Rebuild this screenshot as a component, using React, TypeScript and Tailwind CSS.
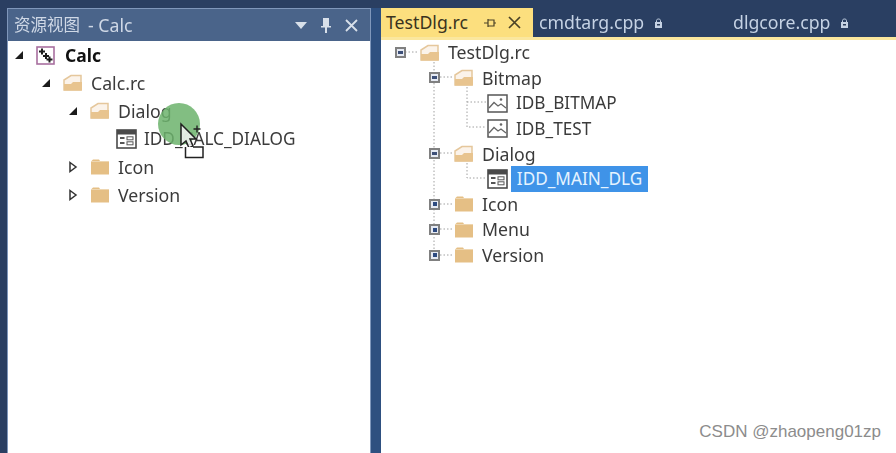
const font = { fontFamily: '"Noto Sans", "Noto Sans CJK SC", sans-serif' };

function FolderOpen() {
  return (
    <svg width="20" height="18" viewBox="0 0 20 18" className="shrink-0">
      <path d="M1 16V6L8 1.5H18V16Z" fill="#fbf3ea" stroke="#e5c79c" strokeWidth="1.5" />
      <path d="M1 10H8L10 8H19V16.5H1Z" fill="#e8c48f" />
    </svg>
  );
}
function FolderClosed() {
  return (
    <svg width="20" height="18" viewBox="0 0 20 18" className="shrink-0">
      <path d="M1 3.5L3 1.5H9L10 3H19V16.5H1Z" fill="#e5bf85" />
      <path d="M1 3.5H19" stroke="#eed6b0" strokeWidth="1" />
    </svg>
  );
}
function DialogIcon() {
  return (
    <svg width="21" height="20" viewBox="0 0 21 20" className="shrink-0">
      <rect x="1" y="1" width="19" height="18" fill="#fff" stroke="#4a4a4a" strokeWidth="1.6" />
      <rect x="1" y="1" width="19" height="4.5" fill="#4a4a4a" />
      <path d="M4 9H8.5M4 14H8.5" stroke="#555" strokeWidth="2" />
      <rect x="11" y="7.8" width="6" height="3" fill="none" stroke="#555" />
      <rect x="11" y="12.8" width="6" height="3" fill="none" stroke="#555" />
    </svg>
  );
}
function BitmapIcon() {
  return (
    <svg width="21" height="19" viewBox="0 0 21 19" className="shrink-0">
      <rect x="1" y="1" width="19" height="17" fill="#fff" stroke="#555" strokeWidth="1.5" />
      <path d="M2 14L7 8.5L11 12L14 10L19 14" fill="none" stroke="#666" strokeWidth="1.3" />
      <circle cx="14" cy="5.5" r="1.3" fill="#666" />
    </svg>
  );
}
function ProjectIcon() {
  return (
    <svg width="19" height="19" viewBox="0 0 19 19" className="shrink-0">
      <rect x="1" y="1" width="17" height="17" fill="#fff" stroke="#a86f9f" strokeWidth="1.6" />
      <path d="M6 2.5V8.5M3 5.5H9M10 7V13M7 10H13M13.5 10.5V16.5M10.5 13.5H16.5" stroke="#1c1c1c" strokeWidth="2" />
    </svg>
  );
}
function Arrow({ open }: { open: boolean }) {
  return (
    <svg width="10" height="12" viewBox="0 0 10 12" className="shrink-0">
      {open ? <path d="M1 10H9V2Z" fill="#1c1c1c" /> : <path d="M2 1.5L8 6L2 10.5Z" fill="#fff" stroke="#333" strokeWidth="1.5" />}
    </svg>
  );
}
function Expander({ open }: { open: boolean }) {
  return (
    <div className="relative z-10 flex h-[11px] w-[11px] shrink-0 items-center justify-center border-2 border-[#808080] bg-[#e6eaf3]">
      {open ? <div className="h-[3px] w-[5px] bg-[#3d4f78]" /> : <div className="h-[4px] w-[4px] bg-[#2d4a80]" />}
    </div>
  );
}

function LeftRow({ indent, open, icon, children, bold, gap, size }: { indent: string; open?: boolean; icon: React.ReactNode; children: React.ReactNode; bold?: boolean; gap: string; size: string }) {
  return (
    <div className={`flex h-[28px] items-center ${indent}`}>
      {open === undefined ? null : <div className="flex w-[22px] shrink-0 justify-start"><Arrow open={open} /></div>}
      {icon}
      <span className={`whitespace-nowrap ${gap} ${size} ${bold ? 'font-bold text-[#111]' : 'text-[#3b3b3b]'}`}>{children}</span>
    </div>
  );
}

function RightRow({ indent, open, icon, children, selected, size }: { indent: string; open?: boolean; icon: React.ReactNode; children: React.ReactNode; selected?: boolean; size: string }) {
  return (
    <div className={`flex h-[25.3px] items-center ${indent}`}>
      {open === undefined ? null : <Expander open={open} />}
      {open === undefined ? null : <div className="w-[14px]" />}
      {icon}
      {selected ? (
        <span className={`ml-[3px] flex h-[26px] w-[137px] items-center justify-center bg-[#3f93e8] whitespace-nowrap text-[#e6f3ff] ${size}`}>{children}</span>
      ) : (
        <span className={`ml-[8px] whitespace-nowrap text-[#3b3b3b] ${size}`}>{children}</span>
      )}
    </div>
  );
}

function Lock() {
  return (
    <svg width="7" height="10" viewBox="0 0 7 10" className="ml-[11px]">
      <path d="M1.5 4V2.5C1.5 0.5 5.5 0.5 5.5 2.5V4" fill="none" stroke="#c5d2e4" />
      <rect x="0" y="4" width="7" height="6" fill="#c5d2e4" />
      <rect x="2" y="6" width="3" height="1.5" fill="#2a3c59" />
    </svg>
  );
}

export default function App() {
  return (
    <div className="flex h-[453px] w-[896px] overflow-hidden bg-[#2a3f62] pt-[8px] pl-[7px]" style={font}>
      {/* Left tool window */}
      <div className="flex w-[364px] shrink-0 flex-col border border-b-0 border-[#7f97bb] bg-white">
        <div className="flex h-[32px] shrink-0 items-center justify-between bg-[#4a648a] pr-[12px] pl-[6px] blur-[0.4px]">
          <span className="flex items-center whitespace-nowrap text-[#cfd8e6]">
            <span className="text-[16.5px]">资源视图</span>
            <span className="ml-[8px] text-[17.7px]">- Calc</span>
          </span>
          <div className="flex items-center gap-[13px]">
            <svg width="12" height="7" viewBox="0 0 12 7"><path d="M0 0H12L6 7Z" fill="#d8e0ea" /></svg>
            <svg width="12" height="17" viewBox="0 0 12 17"><path d="M3 1H9V9H11V10.5H7V16H5V10.5H1V9H3Z" fill="#d8e0ea" /></svg>
            <svg width="13" height="13" viewBox="0 0 13 13"><path d="M1 1L12 12M12 1L1 12" stroke="#d8e0ea" strokeWidth="1.8" /></svg>
          </div>
        </div>
        <div className="relative flex-1 blur-[0.4px]">
          <LeftRow indent="pl-[6px]" open icon={<ProjectIcon />} bold gap="ml-[10px]" size="text-[17.5px]">Calc</LeftRow>
          <LeftRow indent="pl-[33px]" open icon={<FolderOpen />} gap="ml-[8px]" size="text-[17.7px]">Calc.rc</LeftRow>
          <LeftRow indent="pl-[60px]" open icon={<FolderOpen />} gap="ml-[8px]" size="text-[17.7px]">Dialog</LeftRow>
          <LeftRow indent="pl-[108px]" icon={<DialogIcon />} gap="ml-[7px]" size="text-[17.2px]">IDD_CALC_DIALOG</LeftRow>
          <LeftRow indent="pl-[60px]" open={false} icon={<FolderClosed />} gap="ml-[8px]" size="text-[17.7px]">Icon</LeftRow>
          <LeftRow indent="pl-[60px]" open={false} icon={<FolderClosed />} gap="ml-[8px]" size="text-[17.7px]">Version</LeftRow>
          {/* drag cursor overlay */}
          <div className="absolute top-[62px] left-[150px] h-[42px] w-[42px] rounded-full bg-[#6cb36c]/85" />
          <svg width="30" height="38" viewBox="0 0 30 38" className="absolute top-[81px] left-[172px]">
            <path d="M1 2V23L6 19L9 26L13 24L10 17H16Z" fill="#f4f4f4" fillOpacity="0.85" stroke="#222" strokeWidth="1.5" />
            <path d="M13.5 7H20.5M17 3.5V10.5" stroke="#222" strokeWidth="1.4" />
            <path d="M5.5 25V35.5H23V25H13" fill="#fff" stroke="#222" strokeWidth="1.5" />
          </svg>
        </div>
      </div>

      {/* Gutter */}
      <div className="w-[10px] shrink-0 bg-[#2e5080]" />

      {/* Document well */}
      <div className="flex min-w-0 flex-1 flex-col">
        <div className="flex h-[29px] shrink-0 items-stretch text-[17.7px] blur-[0.4px]">
          <div className="flex w-[152px] items-center bg-[#fcdf7e] pl-[5px] text-[#3a3320]">
            <span>TestDlg.rc</span>
            <svg width="12" height="10" viewBox="0 0 12 10" className="ml-[16px]"><path d="M0 5H4M4 1V9M4 2H10V8H4M10 5H12" fill="none" stroke="#4a4226" strokeWidth="1.2" /></svg>
            <svg width="13" height="13" viewBox="0 0 13 13" className="ml-[12px]"><path d="M1 1L12 12M12 1L1 12" stroke="#4a4226" strokeWidth="1.7" /></svg>
          </div>
          <div className="flex w-[195px] items-center pl-[6px] text-[#c5d2e4]">
            <span>cmdtarg.cpp</span>
            <Lock />
          </div>
          <div className="flex items-center pl-[5px] text-[#c5d2e4]">
            <span>dlgcore.cpp</span>
            <Lock />
          </div>
        </div>
        <div className="h-[3px] shrink-0 bg-[#fbe79e]" />
        <div className="relative flex-1 bg-white">
          <div className="relative blur-[0.4px]">
            <svg width="120" height="220" className="absolute top-0 left-0">
              <g fill="none" stroke="#a0a0a0" strokeDasharray="1.5 2">
                <path d="M24 12H38M53 22V215M59 37H72M86 47V87H105M86 62H105M59 113H72M86 123V138H105M59 164H72M59 189H72M59 215H72" />
              </g>
            </svg>
            <RightRow indent="pl-[14px]" open icon={<FolderOpen />} size="text-[17.7px]">TestDlg.rc</RightRow>
            <RightRow indent="pl-[48px]" open icon={<FolderOpen />} size="text-[17.7px]">Bitmap</RightRow>
            <RightRow indent="pl-[106px]" icon={<BitmapIcon />} size="text-[17.2px]">IDB_BITMAP</RightRow>
            <RightRow indent="pl-[106px]" icon={<BitmapIcon />} size="text-[17.2px]">IDB_TEST</RightRow>
            <RightRow indent="pl-[48px]" open icon={<FolderOpen />} size="text-[17.7px]">Dialog</RightRow>
            <RightRow indent="pl-[106px]" icon={<DialogIcon />} selected size="text-[17.2px]">IDD_MAIN_DLG</RightRow>
            <RightRow indent="pl-[48px]" open={false} icon={<FolderClosed />} size="text-[17.7px]">Icon</RightRow>
            <RightRow indent="pl-[48px]" open={false} icon={<FolderClosed />} size="text-[17.7px]">Menu</RightRow>
            <RightRow indent="pl-[48px]" open={false} icon={<FolderClosed />} size="text-[17.7px]">Version</RightRow>
          </div>
          <div className="absolute right-[15px] bottom-[9px] text-[17px] whitespace-nowrap text-[#8c8c8c]" style={{ fontFamily: '"Liberation Sans", sans-serif' }}>CSDN @zhaopeng01zp</div>
        </div>
      </div>
    </div>
  );
}
